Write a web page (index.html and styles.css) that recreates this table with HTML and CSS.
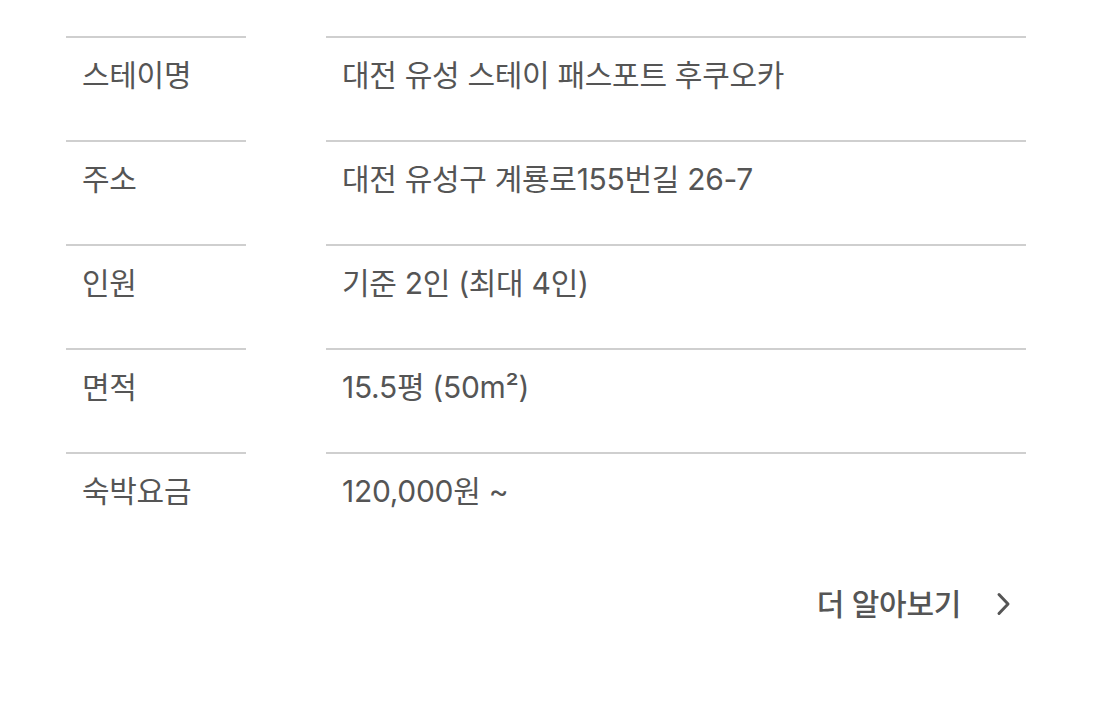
FILE: index.html
```html
<!DOCTYPE html>
<html lang="ko">
<head>
<meta charset="utf-8">
<link rel="stylesheet" href="styles.css">
</head>
<body>
<div class="wrap">
  <dl class="info">
    <div class="row"><dt>스테이명</dt><dd>대전 유성 스테이 패스포트 후쿠오카</dd></div>
    <div class="row"><dt>주소</dt><dd>대전 유성구 계룡로155번길 26-7</dd></div>
    <div class="row"><dt>인원</dt><dd>기준 2인 (최대 4인)</dd></div>
    <div class="row"><dt>면적</dt><dd>15.5평 (50m²)</dd></div>
    <div class="row"><dt>숙박요금</dt><dd>120,000원 ~</dd></div>
  </dl>
  <div class="more-wrap">
    <a class="more" href="#">더 알아보기
      <svg width="18" height="24" viewBox="0 0 18 24"><path d="M5 2.5 L14 12 L5 21.5" fill="none" stroke="#555" stroke-width="3" stroke-linecap="round" stroke-linejoin="round"/></svg>
    </a>
  </div>
</div>
</body>
</html>
```
FILE: styles.css
```css
* { box-sizing: border-box; }
html, body { margin: 0; padding: 0; background: #fff; }
body { font-family: Inter, "Noto Sans CJK KR", sans-serif; color: #555; }
.wrap { width: 960px; margin: 36px 0 0 66px; }
.info { margin: 0; }
.row { display: grid; grid-template-columns: 180px 700px; column-gap: 80px; height: 104px; }
.row dt, .row dd {
  margin: 0; border-top: 2px solid #cfcfcf;
  padding: 17px 16px 0; font-size: 30px; line-height: 40px; letter-spacing: -0.3px;
}
.more-wrap { display: flex; justify-content: flex-end; padding-top: 28px; padding-right: 14px; }
.more { display: flex; align-items: center; gap: 33px; color: #555; text-decoration: none; font-size: 30px; font-weight: 500; line-height: 40px; letter-spacing: -0.3px; }
```
